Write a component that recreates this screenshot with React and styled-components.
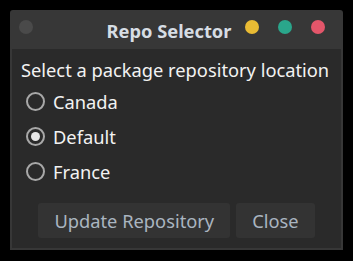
import React, { useState } from "react";
import styled, { createGlobalStyle } from "styled-components";

const Global = createGlobalStyle`
  html, body { margin: 0; padding: 0; background: #000; }
  body { font-family: "Noto Sans", "Open Sans", sans-serif; }
`;

const Window = styled.div`
  margin: 10px;
  width: 333px;
  height: 240px;
  box-sizing: border-box;
  background: #373737;
  border-radius: 3px 3px 0 0;
  padding: 0 2px 2px;
  display: flex;
  flex-direction: column;
`;

const TitleBar = styled.div`
  height: 39px;
  display: flex;
  align-items: center;
  padding: 0 16px 0 7px;
  box-sizing: border-box;
`;

const Dot = styled.span`
  width: 14px;
  height: 14px;
  border-radius: 50%;
  background: ${(p) => p.$color};
  margin-left: ${(p) => p.$gap || 0}px;
  flex: none;
  margin-top: -6px;
`;

const Title = styled.div`
  flex: 1;
  text-align: center;
  font-weight: 700;
  font-size: 18.3px;
  color: #d6dde4;
  padding-left: 60px;
  margin-top: 2px;
  white-space: nowrap;
`;

const Content = styled.div`
  flex: 1;
  background: #2a2a2a;
  display: flex;
  flex-direction: column;
  padding: 9px 0 0 9px;
`;

const Prompt = styled.div`
  font-size: 18.3px;
  color: #f2f2f2;
  line-height: 24px;
  margin-bottom: 2px;
  white-space: nowrap;
`;

const RadioRow = styled.label`
  display: flex;
  align-items: center;
  height: 35px;
  gap: 8px;
  padding-left: 5px;
  font-size: 18.3px;
  color: #f2f2f2;
  cursor: pointer;
`;

const RadioCircle = styled.span`
  width: 19px;
  height: 19px;
  box-sizing: border-box;
  border-radius: 50%;
  border: 2px solid #a8a8a8;
  display: flex;
  align-items: center;
  justify-content: center;
  flex: none;
  &::after {
    content: "";
    width: 9px;
    height: 9px;
    border-radius: 50%;
    background: #e6e6e6;
    display: ${(p) => (p.$checked ? "block" : "none")};
  }
`;

const Buttons = styled.div`
  display: flex;
  justify-content: center;
  gap: 6px;
  padding-right: 9px;
  margin-top: 14px;
`;

const Button = styled.button`
  height: 35px;
  padding: 0 ${(p) => p.$pad}px;
  border: none;
  border-radius: 3px;
  background: #333333;
  color: #aab5c0;
  font-family: "Noto Sans", "Open Sans", sans-serif;
  font-size: 18.3px;
`;

const options = ["Canada", "Default", "France"];

export default function App() {
  const [sel, setSel] = useState("Default");
  return (
    <>
      <Global />
      <Window>
        <TitleBar>
          <Dot $color="#4a4a4a" />
          <Title>Repo Selector</Title>
          <Dot $color="#e9bb34" />
          <Dot $color="#2aa68b" $gap={19} />
          <Dot $color="#e3566a" $gap={19} />
        </TitleBar>
        <Content>
          <Prompt>Select a package repository location</Prompt>
          {options.map((o) => (
            <RadioRow key={o} onClick={() => setSel(o)}>
              <RadioCircle $checked={sel === o} />
              {o}
            </RadioRow>
          ))}
          <Buttons>
            <Button $pad={16}>Update Repository</Button>
            <Button $pad={16}>Close</Button>
          </Buttons>
        </Content>
      </Window>
    </>
  );
}
